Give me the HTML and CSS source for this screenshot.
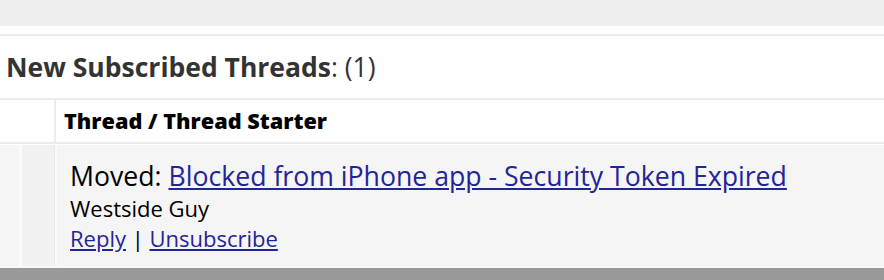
FILE: index.html
```html
<!DOCTYPE html>
<html>
<head>
<meta charset="utf-8">
<link rel="stylesheet" href="styles.css">
</head>
<body>
<div class="topbar"></div>
<div class="block">
  <div class="block-head"><strong>New Subscribed Threads</strong>: (1)</div>
  <div class="thead">
    <div class="th-blank"></div>
    <div class="th-title">Thread / Thread Starter</div>
  </div>
  <div class="trow">
    <div class="cell-icon"></div>
    <div class="cell-icon2"></div>
    <div class="cell-main">
      <div class="title">Moved: <a href="#">Blocked from iPhone app - Security Token Expired</a></div>
      <div class="starter">Westside Guy</div>
      <div class="actions"><a href="#">Reply</a> | <a href="#">Unsubscribe</a></div>
    </div>
  </div>
</div>
<div class="footer"></div>
</body>
</html>
```
FILE: styles.css
```css
html, body {
  margin: 0;
  padding: 0;
  background: #ffffff;
  font-family: "Open Sans", "DejaVu Sans", sans-serif;
  color: #000;
}
.topbar {
  height: 26px;
  background: #eeeeee;
  margin-bottom: 8px;
}
.block {
  border-top: 2px solid #ececec;
}
.block-head {
  height: 62px;
  display: flex;
  align-items: center;
  padding-left: 6px;
  font-size: 26.5px;
  color: #333333;
  border-bottom: 2px solid #ececec;
}
.block-head strong {
  font-weight: 700;
}
.thead {
  display: flex;
  height: 42px;
  border-bottom: 2px solid #ececec;
}
.th-blank {
  width: 54px;
  border-right: 2px solid #ececec;
}
.th-title {
  padding-left: 8px;
  padding-bottom: 1px;
  display: flex;
  align-items: center;
  font-weight: 800;
  font-size: 21.7px;
}
.trow {
  display: flex;
  margin-top: 1px;
  height: 121px;
  background: #fbfbfb;
  border-bottom: 2px solid #f8f8f8;
}
.cell-icon {
  width: 19px;
  margin-right: 3px;
  background: #f5f5f5;
}
.cell-icon2 {
  width: 32px;
  border-right: 1px solid #e8e8e8;
  margin-right: 2px;
  background: #f1f1f1;
}
.cell-main {
  flex: 1;
  background: #f5f5f5;
  padding: 14px 0 0 13px;
}
.title {
  font-size: 26.65px;
  line-height: 34px;
}
.starter {
  font-size: 22px;
  line-height: 31px;
}
.actions {
  font-size: 22px;
  line-height: 28px;
}
a {
  color: #24249a;
  text-decoration: underline;
}
.footer {
  height: 12px;
  background: #999999;
}
```
